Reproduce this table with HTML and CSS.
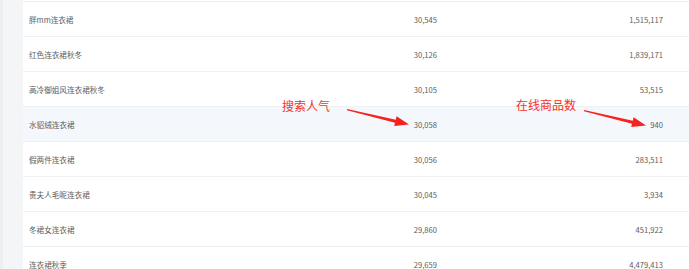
FILE: index.html
```html
<!DOCTYPE html>
<html lang="zh">
<head>
<meta charset="utf-8">
<link rel="stylesheet" href="styles.css">
</head>
<body>
<div class="page">
  <div class="side"><div class="side-edge"></div></div>
  <div class="table">
    <div class="row"><div class="c name">胖mm连衣裙</div><div class="c num">30,545</div><div class="c num">1,515,117</div><div></div></div>
    <div class="row"><div class="c name">红色连衣裙秋冬</div><div class="c num">30,126</div><div class="c num">1,839,171</div><div></div></div>
    <div class="row"><div class="c name">高冷御姐风连衣裙秋冬</div><div class="c num">30,105</div><div class="c num">53,515</div><div></div></div>
    <div class="row hl"><div class="c name">水貂绒连衣裙</div><div class="c num">30,058</div><div class="c num">940</div><div></div></div>
    <div class="row"><div class="c name">假两件连衣裙</div><div class="c num">30,056</div><div class="c num">283,511</div><div></div></div>
    <div class="row"><div class="c name">贵夫人毛呢连衣裙</div><div class="c num">30,045</div><div class="c num">3,934</div><div></div></div>
    <div class="row"><div class="c name">冬裙女连衣裙</div><div class="c num">29,860</div><div class="c num">451,922</div><div></div></div>
    <div class="row"><div class="c name">连衣裙秋季</div><div class="c num">29,659</div><div class="c num">4,479,413</div><div></div></div>
  </div>
</div>
<div class="note note1">搜索人气</div>
<div class="note note2">在线商品数</div>
<svg class="arrows" width="689" height="269" viewBox="0 0 689 269">
  <polygon fill="#f5231b" points="347,109 395.8,119.7 396.6,116.3 409,124.5 394.2,126.1 395,122.7 347,110.2"/>
  <polygon fill="#f5231b" points="584,110 632.8,120.7 633.6,117.3 646,125.5 631.2,127.1 632,123.7 584,111.2"/>
</svg>
</body>
</html>
```
FILE: styles.css
```css
html, body {
  margin: 0;
  padding: 0;
  width: 689px;
  height: 269px;
  overflow: hidden;
  background: #ffffff;
  font-family: "Noto Sans CJK SC", "Noto Sans", sans-serif;
}
.page {
  display: flex;
  height: 269px;
}
.side {
  width: 23px;
  flex: none;
  background: #f4f5f7;
  display: flex;
}
.side-edge {
  width: 3px;
  background: #eceef1;
}
.table {
  flex: 1;
  padding-top: 1px;
}
.row {
  display: grid;
  grid-template-columns: 294px 120px 226px 1fr;
  height: 34px;
  border-top: 1px solid #eef0f3;
  align-items: center;
  font-size: 7.6px;
  color: #5c5c5c;
}
.row.hl {
  background: #f4f7fc;
}
.c.name {
  padding-left: 6px;
}
.c.num {
  text-align: right;
}
.note {
  position: absolute;
  font-size: 12px;
  line-height: 14px;
  color: #f3342a;
}
.note1 { left: 282px; top: 99px; }
.note2 { left: 516px; top: 98px; }
.arrows {
  position: absolute;
  left: 0;
  top: 0;
}
```
